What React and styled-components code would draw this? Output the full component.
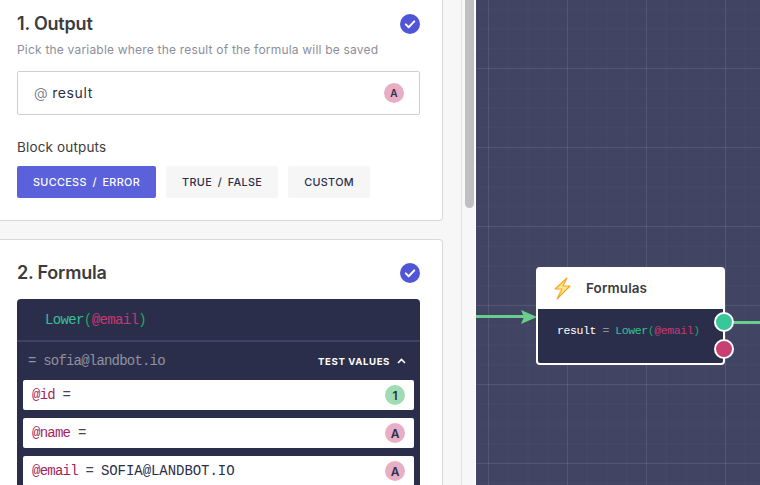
import React from "react";
import styled, { createGlobalStyle, css } from "styled-components";

const colors = {
  ink: "#3c3c3e",
  navy: "#2b2e4a",
  indigo: "#5a61da",
  pink: "#e8aec6",
  green: "#9fdcb1",
  grey: "#8d8e9c",
  line: "#d9d9db",
  mono: '"Liberation Mono", "DejaVu Sans Mono", monospace',
  sans: 'Inter, "Noto Sans", sans-serif',
};

const Global = createGlobalStyle`
  html, body {
    margin: 0;
    height: 100%;
    overflow: hidden;
    background: #f7f7f8;
    font-family: ${colors.sans};
  }
`;

const Page = styled.div`
  display: flex;
  width: 760px;
  height: 485px;
  overflow: hidden;
`;

const Sidebar = styled.aside`
  display: flex;
  flex: 0 0 476px;
  height: 485px;
  background: #f7f7f8;
`;

const Column = styled.div`
  flex: 0 0 443px;
  display: flex;
  flex-direction: column;
  gap: 18px;
`;

const Card = styled.section`
  box-sizing: border-box;
  width: 443px;
  background: #fff;
  border: 1px solid ${colors.line};
  border-left: 0;
  border-radius: 0 4px 4px 0;
  padding: 21px 22px 22px 17px;
  flex-shrink: 0;

  &.first {
    border-top: 0;
    border-radius: 0 0 4px 0;
    padding-top: 12px;
  }
  &.last {
    padding-bottom: 0;
  }
`;

const CardHead = styled.div`
  display: flex;
  justify-content: space-between;
  align-items: center;
  height: 24px;
`;

const Title = styled.h2`
  margin: 0;
  font-size: 18px;
  line-height: 24px;
  font-weight: 600;
  letter-spacing: -0.2px;
  color: ${colors.ink};
`;

const Hint = styled.p`
  margin: 5px 0 0;
  font-size: 12px;
  line-height: 18px;
  letter-spacing: 0.2px;
  color: ${colors.grey};
`;

const Field = styled.div`
  box-sizing: border-box;
  display: flex;
  align-items: center;
  justify-content: space-between;
  height: 44px;
  margin-top: 12px;
  padding: 0 15px 1px 16px;
  border: 1px solid #cfcfd2;
  border-radius: 2px;
  font-size: 14px;
  color: ${colors.navy};
  letter-spacing: 0.6px;
`;

const FieldName = styled.span`
  display: flex;
  gap: 4px;
`;

const At = styled.span`
  color: #5f6b78;
  font-weight: 300;
`;

const Badge = styled.span`
  display: inline-flex;
  align-items: center;
  justify-content: center;
  width: 20px;
  height: 20px;
  border-radius: 50%;
  flex-shrink: 0;
  font-family: ${colors.sans};
  font-size: ${(p) => p.$size || 10}px;
  font-weight: 600;
  letter-spacing: 0;
  color: ${colors.navy};
  background: ${(p) => (p.$kind === "number" ? colors.green : colors.pink)};
`;

const Label = styled.div`
  margin-top: 23px;
  font-size: 13.5px;
  line-height: 18px;
  letter-spacing: 0.15px;
  color: ${colors.ink};
`;

const Choices = styled.div`
  display: flex;
  gap: 10px;
  margin-top: 10px;
`;

const Choice = styled.button`
  height: 32px;
  padding: 0 16px;
  border: 0;
  border-radius: 2px;
  font-family: inherit;
  font-size: 10.8px;
  font-weight: 500;
  letter-spacing: 0.35px;
  word-spacing: 2.5px;
  ${(p) =>
    p.$active
      ? css`
          background: ${colors.indigo};
          color: #fff;
        `
      : css`
          background: #f6f6f7;
          color: ${colors.navy};
        `}
`;

const Editor = styled.div`
  margin-top: 14px;
  background: ${colors.navy};
  border-radius: 4px 4px 0 0;
  padding-bottom: 6px;
`;

const Code = styled.div`
  padding: 0 28px;
  height: 41px;
  display: flex;
  align-items: center;
  font-family: ${colors.mono};
  font-size: 14px;
  letter-spacing: -0.63px;
  border-bottom: 2px solid #3f4263;
`;

const Fn = styled.span`
  color: #36c196;
`;
const Paren = styled.span`
  color: #1faa59;
`;
const Var = styled.span`
  color: ${(p) => (p.$dark ? "#a51f5c" : "#c9396f")};
`;

const ResultRow = styled.div`
  height: 38px;
  display: flex;
  align-items: center;
  justify-content: space-between;
  padding: 0 14px 0 11px;
  font-family: ${colors.mono};
  font-size: 14px;
  letter-spacing: -0.8px;
  color: #8f91a3;
`;

const Toggle = styled.span`
  display: flex;
  align-items: center;
  gap: 7px;
  font-family: ${colors.sans};
  font-size: 9.6px;
  font-weight: 700;
  letter-spacing: 0.6px;
  color: #fff;
`;

const Values = styled.div`
  display: flex;
  flex-direction: column;
  gap: 8px;
  padding: 0 6px;
`;

const ValueRow = styled.div`
  box-sizing: border-box;
  height: 30px;
  display: flex;
  align-items: center;
  justify-content: space-between;
  padding: 0 9px;
  background: #fff;
  border-radius: 2px;
  font-family: ${colors.mono};
  font-size: 14px;
  letter-spacing: -0.75px;
  color: #3f4263;
`;

const Value = styled.span`
  letter-spacing: -0.05px;
  color: ${colors.navy};
`;

const Canvas = styled.main`
  position: relative;
  flex: 1;
  height: 485px;
  background-color: #414563;
  background-image:
    linear-gradient(rgba(255, 255, 255, 0.07) 1px, transparent 1px),
    linear-gradient(90deg, rgba(255, 255, 255, 0.07) 1px, transparent 1px),
    linear-gradient(rgba(255, 255, 255, 0.025) 1px, transparent 1px),
    linear-gradient(90deg, rgba(255, 255, 255, 0.025) 1px, transparent 1px);
  background-size: 79px 79px, 79px 79px, 19.75px 19.75px, 19.75px 19.75px;
  background-position: 0 68px, 12px 0, 0 68px, 12px 0;
`;

const Scrollbar = styled.div`
  flex: 1;
  border-left: 1px solid #e4e4e6;
  margin-left: 18px;
  padding-left: 3px;
  border-right: 1px solid #fff;
`;

const Thumb = styled.div`
  width: 9px;
  height: 208px;
  background: #bfbfbf;
  border-radius: 0 0 5px 5px;
`;

const Wire = styled.div`
  position: absolute;
  height: 3px;
  background: #67cf8b;
  left: ${(p) => p.$left}px;
  width: ${(p) => p.$width}px;
  top: ${(p) => p.$top}px;
`;

const Arrow = styled.svg`
  position: absolute;
  left: 45px;
  top: 310px;
`;

const Node = styled.div`
  position: absolute;
  left: 60px;
  top: 267px;
  box-sizing: border-box;
  width: 189px;
  height: 98px;
  border: 2px solid #fff;
  border-radius: 4px;
  background: ${colors.navy};
`;

const NodeHead = styled.div`
  box-sizing: border-box;
  height: 40px;
  display: flex;
  align-items: center;
  gap: 13px;
  padding: 0 0 2px 15px;
  background: #fff;
  font-size: 13.5px;
  font-weight: 600;
  letter-spacing: 0.1px;
  color: ${colors.ink};
`;

const NodeBody = styled.div`
  padding: 14px 0 0 19px;
  font-family: ${colors.mono};
  font-size: 11.5px;
  line-height: 16px;
  letter-spacing: -0.42px;
  color: #fff;
  white-space: nowrap;
`;

const Equals = styled.span`
  color: #8f91a3;
`;

const Port = styled.span`
  position: absolute;
  right: -11px;
  top: ${(p) => p.$top}px;
  box-sizing: border-box;
  width: 20px;
  height: 20px;
  border: 2px solid #fff;
  border-radius: 50%;
  background: ${(p) => p.$color};
`;

const Check = () => (
  <svg width="20" height="20" viewBox="0 0 20 20">
    <circle cx="10" cy="10" r="10" fill="#4f55d6" />
    <path d="M5.8 10.4l2.9 2.8 5.6-5.8" fill="none" stroke="#fff" strokeWidth="2" strokeLinecap="round" strokeLinejoin="round" />
  </svg>
);

const Bolt = () => (
  <svg width="20" height="24" viewBox="0 0 20 24">
    <path d="M14 2L2 13h7L4 23l13-13h-7z" fill="#ffe68a" stroke="#f5a623" strokeWidth="1.1" strokeLinejoin="round" />
  </svg>
);

const testValues = [
  { name: "@id", value: "", type: "number", mark: "1" },
  { name: "@name", value: "", type: "text", mark: "A" },
  { name: "@email", value: "SOFIA@LANDBOT.IO", type: "text", mark: "A" },
];

const Formula = () => (
  <>
    <Fn>Lower</Fn>
    <Paren>(</Paren>
    <Var>@email</Var>
    <Paren>)</Paren>
  </>
);

export default function App() {
  return (
    <Page>
      <Global />
      <Sidebar>
        <Column>
          <Card className="first">
            <CardHead>
              <Title>1. Output</Title>
              <Check />
            </CardHead>
            <Hint>Pick the variable where the result of the formula will be saved</Hint>
            <Field>
              <FieldName>
                <At>@</At> result
              </FieldName>
              <Badge>A</Badge>
            </Field>
            <Label>Block outputs</Label>
            <Choices>
              <Choice $active>SUCCESS / ERROR</Choice>
              <Choice>TRUE / FALSE</Choice>
              <Choice>CUSTOM</Choice>
            </Choices>
          </Card>
          <Card className="last">
            <CardHead>
              <Title>2. Formula</Title>
              <Check />
            </CardHead>
            <Editor>
              <Code>
                <Formula />
              </Code>
              <ResultRow>
                <span>= sofia@landbot.io</span>
                <Toggle>
                  TEST VALUES
                  <svg width="9" height="6" viewBox="0 0 9 6">
                    <path d="M1 5l3.5-3.5L8 5" fill="none" stroke="#fff" strokeWidth="1.6" />
                  </svg>
                </Toggle>
              </ResultRow>
              <Values>
                {testValues.map((v) => (
                  <ValueRow key={v.name}>
                    <span>
                      <Var $dark>{v.name}</Var> = <Value>{v.value}</Value>
                    </span>
                    <Badge $kind={v.type} $size={12}>{v.mark}</Badge>
                  </ValueRow>
                ))}
              </Values>
            </Editor>
          </Card>
        </Column>
        <Scrollbar>
          <Thumb />
        </Scrollbar>
      </Sidebar>
      <Canvas>
        <Wire $left={0} $width={50} $top={315} />
        <Arrow width="16" height="14" viewBox="0 0 16 14">
          <path d="M0 0l16 7-16 7 3-7z" fill="#67cf8b" />
        </Arrow>
        <Node>
          <NodeHead>
            <Bolt />
            Formulas
          </NodeHead>
          <NodeBody>
            result <Equals>=</Equals> <Formula />
          </NodeBody>
          <Port $top={43} $color="#37c79a" />
          <Port $top={70} $color="#c83f73" />
        </Node>
        <Wire $left={258} $width={30} $top={321} />
      </Canvas>
    </Page>
  );
}
